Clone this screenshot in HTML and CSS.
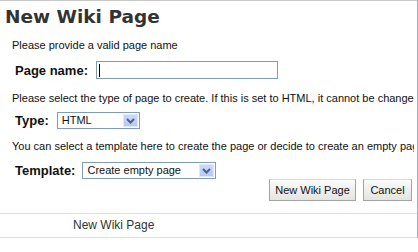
FILE: index.html
```html
<!DOCTYPE html>
<html>
<head>
<meta charset="utf-8">
<link rel="stylesheet" href="styles.css">
</head>
<body>
<div class="panel">
  <h1 class="title">New Wiki Page</h1>
  <div class="content">
    <p class="hint hint-first">Please provide a valid page name</p>
    <div class="row row-name">
      <span class="label">Page name:</span>
      <div class="textbox"><span class="caret"></span></div>
    </div>
    <p class="hint hint-type">Please select the type of page to create. If this is set to HTML, it cannot be changed</p>
    <div class="row row-type">
      <span class="label">Type:</span>
      <div class="select select-type"><span class="select-text">HTML</span><span class="arrow"><svg width="9" height="6" viewBox="0 0 9 6"><path d="M1 1 L4.5 4.5 L8 1" fill="none" stroke="#4d6185" stroke-width="2"/></svg></span></div>
    </div>
    <p class="hint hint-template">You can select a template here to create the page or decide to create an empty page</p>
    <div class="row row-template">
      <span class="label">Template:</span>
      <div class="select select-template"><span class="select-text">Create empty page</span><span class="arrow"><svg width="9" height="6" viewBox="0 0 9 6"><path d="M1 1 L4.5 4.5 L8 1" fill="none" stroke="#4d6185" stroke-width="2"/></svg></span></div>
    </div>
    <div class="buttons">
      <button class="btn btn-create">New Wiki Page</button>
      <button class="btn btn-cancel">Cancel</button>
    </div>
  </div>
  <div class="tabbar"><span class="tab">New Wiki Page</span></div>
</div>
</body>
</html>
```

FILE: styles.css
```css
html, body {
  margin: 0;
  padding: 0;
  background: #fff;
}
body {
  width: 418px;
  height: 252px;
  overflow: hidden;
  font-family: "Liberation Sans", Arial, sans-serif;
  font-size: 11px;
  color: #111;
}
.panel {
  width: 418px;
  box-sizing: border-box;
  border-top: 1px solid #c8c8c8;
  border-right: 1px solid #a6adc2;
}
.title {
  margin: 5px 0 0 5px;
  font-family: "DejaVu Sans", Verdana, sans-serif;
  font-weight: bold;
  font-size: 18.5px;
  line-height: 22px;
  color: #333;
}
.content {
  width: 414px;
  overflow: hidden;
}
.hint {
  margin: 0;
  padding-left: 12px;
  line-height: 13px;
  white-space: nowrap;
}
.hint-first { margin-top: 11px; }
.hint-type { margin-top: 13px; }
.hint-template { margin-top: 11px; }
.row {
  display: flex;
  align-items: center;
  gap: 8px;
  padding-left: 15px;
}
.row-name { margin-top: 9px; }
.row-type { margin-top: 7px; }
.row-template { margin-top: 9px; gap: 7px; }
.label {
  font-weight: bold;
  font-size: 13px;
  color: #111;
}
.textbox {
  width: 182px;
  height: 18px;
  box-sizing: border-box;
  border: 1px solid #7f9db9;
  display: flex;
  align-items: center;
  padding-left: 2px;
}
.caret {
  width: 1px;
  height: 13px;
  background: #000;
}
.select {
  height: 17px;
  box-sizing: border-box;
  border: 1px solid #7f9db9;
  display: flex;
  align-items: stretch;
  padding: 1px;
}
.select-type { width: 83px; }
.select-template { width: 134px; }
.select-text {
  flex: 1;
  padding-left: 3px;
  font-size: 11px;
  line-height: 13px;
}
.arrow {
  width: 15px;
  box-sizing: border-box;
  border: 1px solid #dfe7fb;
  background: linear-gradient(#cbdaf9, #b6c9f3);
  display: flex;
  align-items: center;
  justify-content: center;
}
.buttons {
  display: flex;
  justify-content: flex-end;
  gap: 7px;
  padding-right: 2px;
  margin-top: 0;
}
.btn {
  height: 22px;
  box-sizing: border-box;
  font-family: "Liberation Sans", Arial, sans-serif;
  font-size: 11px;
  color: #111;
  border: 1px solid #a3a3a3;
  border-top-color: #d6d6e8;
  background: linear-gradient(#fbfbfb, #e4e4e0);
  padding: 0;
}
.btn-create { width: 87px; }
.btn-cancel { width: 49px; }
.tabbar {
  margin-top: 12px;
  height: 25px;
  box-sizing: border-box;
  border-top: 1px solid #e2e2e2;
  border-bottom: 1px solid #e2e2e2;
  padding-left: 73px;
  line-height: 23px;
  font-size: 12px;
  color: #333;
}
```
